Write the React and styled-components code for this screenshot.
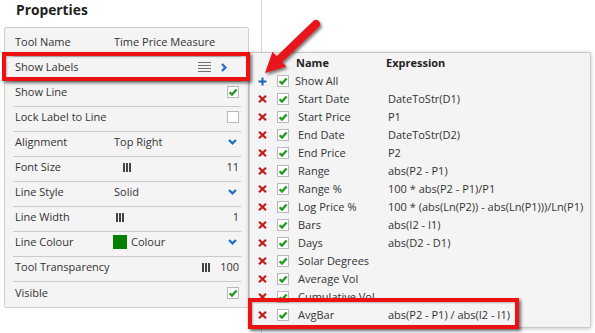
import React from 'react';
import styled, { createGlobalStyle } from 'styled-components';

const Global = createGlobalStyle`
  html, body { margin: 0; padding: 0; background: #fff; }
  body {
    font-family: "Open Sans", "Noto Sans", sans-serif;
    color: #333;
    width: 595px;
    height: 333px;
    overflow: hidden;
  }
`;

const Page = styled.div`
  position: relative;
  display: flex;
  width: 595px;
  height: 333px;
  overflow: hidden;
`;

const LeftCol = styled.div`
  width: 245px;
  padding-left: 4px;
  flex: none;
`;

const Title = styled.h1`
  margin: 0 0 7px 0;
  padding-left: 12px;
  font-size: 13.8px;
  line-height: 20px;
  font-weight: 700;
  color: #222;
`;

const Panel = styled.div`
  box-sizing: border-box;
  width: 245px;
  background: #f4f4f4;
  border: 1px solid #cfcfcf;
  border-radius: 2px;
  padding: 4px 7px 0 8px;
`;

const Row = styled.div`
  box-sizing: border-box;
  display: flex;
  align-items: center;
  height: 25px;
  padding: 0 2px 4px 2px;
  border-bottom: ${p => (p.$last ? 'none' : '1px solid #cacaca')};
  font-size: 11px;
  line-height: 16px;
  white-space: nowrap;
`;

const Label = styled.span`
  width: 99px;
  flex: none;
`;

const Value = styled.span`
  flex: 1;
  display: flex;
  align-items: center;
  gap: 4px;
  padding-left: ${p => p.$indent || 0}px;
`;

const Right = styled.span`
  display: flex;
  align-items: center;
  gap: ${p => p.$gap || 0}px;
`;

const Swatch = styled.span`
  width: 14px;
  height: 14px;
  background: #008000;
  margin-left: -1px;
`;

const Box = styled.span`
  box-sizing: border-box;
  width: 12px;
  height: 12px;
  border: 1px solid #b9b9b9;
  background: #fff;
  display: inline-flex;
  align-items: center;
  justify-content: center;
  flex: none;
`;

const RightArea = styled.div`
  flex: 1;
  margin-left: 12px;
  border-left: 1px solid #d6d6d6;
`;

const Popup = styled.div`
  position: absolute;
  left: 249px;
  top: 52px;
  width: 342px;
  height: 276px;
  box-sizing: border-box;
  background: #f4f4f4;
  border: 1px solid #c8c8c8;
  border-radius: 2px;
  box-shadow: 0 1px 4px rgba(0, 0, 0, 0.22);
  padding-top: 1px;
`;

const PopRow = styled.div`
  display: flex;
  align-items: center;
  height: 18px;
  font-size: 11px;
  line-height: 16px;
  white-space: nowrap;
  font-weight: ${p => (p.$head ? 700 : 400)};
  color: ${p => (p.$head ? '#222' : '#333')};
`;

const IconCell = styled.span`
  width: 25px;
  flex: none;
  display: flex;
  align-items: center;
  justify-content: center;
`;

const CheckCell = styled.span`
  width: 12px;
  margin-left: 2px;
  flex: none;
  display: flex;
`;

const NameCell = styled.span`
  width: 90px;
  flex: none;
  margin-left: ${p => 9 + (p.$shift || 0)}px;
  margin-right: ${p => -(p.$shift || 0)}px;
`;

const ExprCell = styled.span`
  margin-left: ${p => p.$shift || 0}px;
`;

const Highlight = styled.div`
  position: absolute;
  box-sizing: border-box;
  left: ${p => p.$x}px;
  top: ${p => p.$y}px;
  width: ${p => p.$w}px;
  height: ${p => p.$h}px;
  border: 4px solid #ee1111;
  box-shadow: 2px 2px 3px rgba(0, 0, 0, 0.55), inset 1px 1px 2px rgba(0, 0, 0, 0.25);
  pointer-events: none;
`;

const ArrowSvg = styled.svg`
  position: absolute;
  left: 250px;
  top: 10px;
  overflow: visible;
`;

const Check = ({ on = true }) => (
  <Box>
    {on && (
      <svg width="10" height="10" viewBox="0 0 10 10">
        <path d="M1.6 5.2 L4 7.6 L8.6 2.4" fill="none" stroke="#1f9a1f" strokeWidth="2.3" />
      </svg>
    )}
  </Box>
);

const ChevronDown = () => (
  <svg width="9" height="6" viewBox="0 0 9 6">
    <path d="M1 1 L4.5 4.4 L8 1" fill="none" stroke="#1f6fbf" strokeWidth="2.3" />
  </svg>
);

const ChevronRight = () => (
  <svg width="6" height="9" viewBox="0 0 6 9">
    <path d="M1 1 L4.4 4.5 L1 8" fill="none" stroke="#1f6fbf" strokeWidth="2.3" />
  </svg>
);

const Bars = () => (
  <svg width="8" height="9" viewBox="0 0 8 9">
    <rect x="0" y="0" width="2" height="9" fill="#444" />
    <rect x="3" y="0" width="2" height="9" fill="#444" />
    <rect x="6" y="0" width="2" height="9" fill="#444" />
  </svg>
);

const Lines = () => (
  <svg width="13" height="10" viewBox="0 0 13 10">
    {[0, 3, 6, 9].map(y => (
      <rect key={y} x="0" y={y} width="13" height="1" fill="#707070" />
    ))}
  </svg>
);

const Cross = () => (
  <svg width="9" height="8" viewBox="0 0 9 8">
    <path d="M1 0.8 L8 7.2 M8 0.8 L1 7.2" fill="none" stroke="#c01a1a" strokeWidth="2.2" />
  </svg>
);

const Plus = () => (
  <svg width="9" height="9" viewBox="0 0 9 9">
    <path d="M0.5 4.5 L8.5 4.5 M4.5 0.5 L4.5 8.5" fill="none" stroke="#1d62b5" strokeWidth="2" />
  </svg>
);

const labels = [
  { name: 'Start Date', expr: 'DateToStr(D1)' },
  { name: 'Start Price', expr: 'P1' },
  { name: 'End Date', expr: 'DateToStr(D2)' },
  { name: 'End Price', expr: 'P2' },
  { name: 'Range', expr: 'abs(P2 - P1)' },
  { name: 'Range %', expr: '100 * abs(P2 - P1)/P1' },
  { name: 'Log Price %', expr: '100 * (abs(Ln(P2)) - abs(Ln(P1)))/Ln(P1)' },
  { name: 'Bars', expr: 'abs(I2 - I1)' },
  { name: 'Days', expr: 'abs(D2 - D1)' },
  { name: 'Solar Degrees', expr: '' },
  { name: 'Average Vol', expr: '' },
  { name: 'Cumulative Vol', expr: '' },
  { name: 'AvgBar', expr: 'abs(P2 - P1) / abs(I2 - I1)' },
];

export default function App() {
  return (
    <Page>
      <Global />
      <LeftCol>
        <Title>Properties</Title>
        <Panel>
          <Row>
            <Label>Tool Name</Label>
            <Value>Time Price Measure</Value>
          </Row>
          <Row>
            <Label>Show Labels</Label>
            <Value />
            <Right $gap={10}>
              <Lines />
              <ChevronRight />
              <span style={{ width: 2 }} />
            </Right>
          </Row>
          <Row>
            <Label>Show Line</Label>
            <Value />
            <Check />
          </Row>
          <Row>
            <Label>Lock Label to Line</Label>
            <Value />
            <Check on={false} />
          </Row>
          <Row>
            <Label>Alignment</Label>
            <Value>Top Right</Value>
            <Right>
              <ChevronDown />
              <span style={{ width: 2 }} />
            </Right>
          </Row>
          <Row>
            <Label>Font Size</Label>
            <Value $indent={9}>
              <Bars />
            </Value>
            <Right>11</Right>
          </Row>
          <Row>
            <Label>Line Style</Label>
            <Value>Solid</Value>
            <Right>
              <ChevronDown />
              <span style={{ width: 2 }} />
            </Right>
          </Row>
          <Row>
            <Label>Line Width</Label>
            <Value $indent={2}>
              <Bars />
            </Value>
            <Right>1</Right>
          </Row>
          <Row>
            <Label>Line Colour</Label>
            <Value>
              <Swatch />
              Colour
            </Value>
            <Right>
              <ChevronDown />
              <span style={{ width: 2 }} />
            </Right>
          </Row>
          <Row>
            <Label>Tool Transparency</Label>
            <Value />
            <Right $gap={10}>
              <Bars />
              100
            </Right>
          </Row>
          <Row $last>
            <Label>Visible</Label>
            <Value />
            <Check />
          </Row>
        </Panel>
      </LeftCol>
      <RightArea />

      <Popup>
        <PopRow $head>
          <IconCell />
          <CheckCell />
          <NameCell $shift={-2}>Name</NameCell>
          <ExprCell $shift={-2}>Expression</ExprCell>
        </PopRow>
        <PopRow>
          <IconCell>
            <Plus />
          </IconCell>
          <CheckCell>
            <Check />
          </CheckCell>
          <NameCell $shift={-3}>Show All</NameCell>
        </PopRow>
        {labels.map(l => (
          <PopRow key={l.name}>
            <IconCell>
              <Cross />
            </IconCell>
            <CheckCell>
              <Check />
            </CheckCell>
            <NameCell>{l.name}</NameCell>
            <ExprCell>{l.expr}</ExprCell>
          </PopRow>
        ))}
      </Popup>

      <Highlight $x={2} $y={52} $w={248} $h={29} />
      <Highlight $x={248} $y={298} $w={271} $h={31} />

      <ArrowSvg width="80" height="75" viewBox="250 10 80 75">
        <defs>
          <filter id="sh" x="-30%" y="-30%" width="160%" height="160%">
            <feDropShadow dx="1.5" dy="2" stdDeviation="1.4" floodColor="#000" floodOpacity="0.55" />
          </filter>
        </defs>
        <path
          d="M313.2 21.1 L276.6 56.3 L272.5 51.8 L265 73 L286.3 66.4 L282.2 62.1 L318.8 26.9 A4 4 0 0 0 313.2 21.1 Z"
          fill="#e8141b"
          filter="url(#sh)"
        />
      </ArrowSvg>
    </Page>
  );
}
